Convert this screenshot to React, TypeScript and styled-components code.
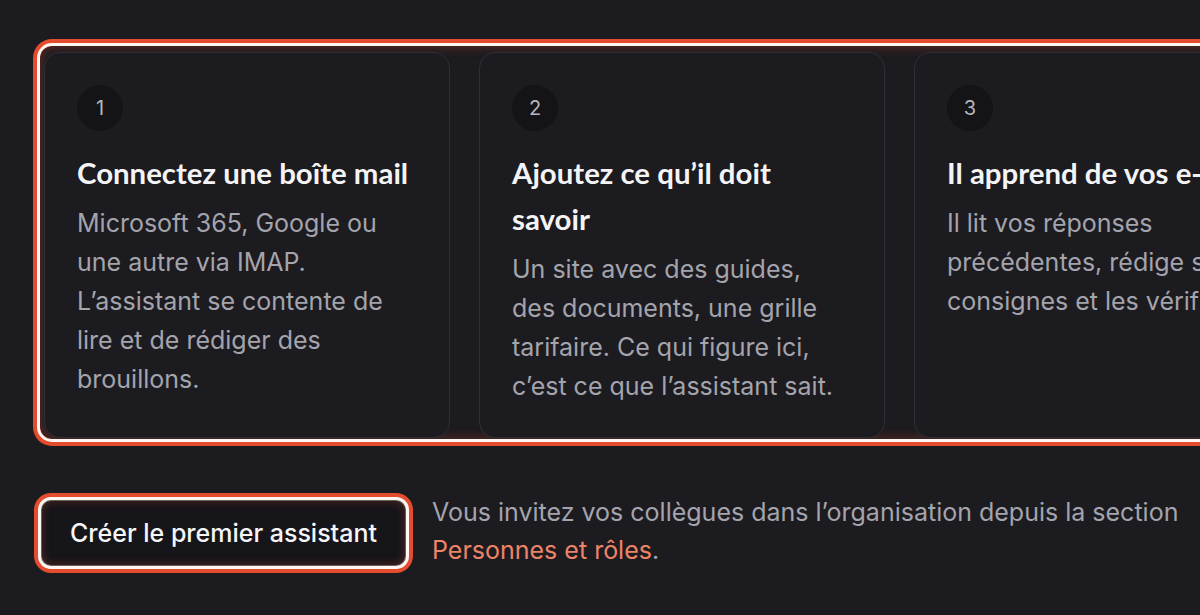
import styled, { createGlobalStyle } from "styled-components";

const GlobalStyle = createGlobalStyle`
  html, body {
    margin: 0;
    padding: 0;
    background: #1c1b20;
    overflow: hidden;
  }
  body {
    width: 1200px;
    height: 615px;
  }
`;

const Page = styled.main`
  padding: 46px 0 0 40px;
  font-family: Inter, "Liberation Sans", sans-serif;
  color: #a4a4ad;
`;

const StepsRing = styled.section`
  width: 1320px;
  border-radius: 12px;
  padding: 6px 0 1px 4px;
  box-shadow:
    0 0 0 3px #fdf7f4,
    0 0 0 7px #e34d2d,
    inset 0 0 12px rgba(225, 75, 44, 0.4);
`;

const Steps = styled.ol`
  display: flex;
  gap: 29px;
  margin: 0;
  padding: 0;
  list-style: none;
`;

const Card = styled.li`
  flex: 0 0 406px;
  box-sizing: border-box;
  padding: 32px 39px 31px 32px;
  border: 1px solid #2f2e34;
  border-radius: 16px;
  background: #1c1b20;
`;

const Badge = styled.span`
  display: flex;
  align-items: center;
  justify-content: center;
  width: 46px;
  height: 46px;
  border-radius: 50%;
  background: #141417;
  color: #b6b6be;
  font-size: 20px;
`;

const CardTitle = styled.h3`
  margin: 19px 0 8px;
  font-family: Lato, "Noto Sans", sans-serif;
  font-weight: 700;
  font-size: 29.4px;
  line-height: 46px;
  color: #f4f4f6;
`;

const CardText = styled.p`
  margin: 0;
  font-size: 25px;
  line-height: 39px;
  color: #a4a4ad;
`;

const Footer = styled.div`
  display: flex;
  align-items: center;
  gap: 26px;
  margin-top: 54px;
  margin-left: 1px;
`;

const PrimaryButton = styled.button`
  flex: none;
  height: 66px;
  padding: 0 28px;
  border: 1px solid rgba(255, 230, 220, 0.35);
  border-radius: 10px;
  background: #16151a;
  color: #f6f6f8;
  font-family: Inter, "Liberation Sans", sans-serif;
  font-size: 25px;
  font-weight: 500;
  box-shadow:
    0 0 0 3px #fdf7f4,
    0 0 0 7px #e34d2d,
    inset 0 0 10px rgba(225, 75, 44, 0.3);
  cursor: pointer;
`;

const Note = styled.p`
  width: 780px;
  margin: 0 0 4px;
  font-size: 25px;
  line-height: 38px;
  color: #a4a4ad;
`;

const NoteLink = styled.a`
  color: #ec8467;
  text-decoration: none;
`;

const steps = [
  {
    title: "Connectez une boîte mail",
    text: "Microsoft 365, Google ou une autre via IMAP. L’assistant se contente de lire et de rédiger des brouillons.",
  },
  {
    title: "Ajoutez ce qu’il doit savoir",
    text: "Un site avec des guides, des documents, une grille tarifaire. Ce qui figure ici, c’est ce que l’assistant sait.",
  },
  {
    title: "Il apprend de vos e-mails",
    text: "Il lit vos réponses précédentes, rédige ses consignes et les vérifie.",
  },
];

export default function App() {
  return (
    <>
      <GlobalStyle />
      <Page>
        <StepsRing>
          <Steps>
            {steps.map((step, index) => (
              <Card key={step.title}>
                <Badge>{index + 1}</Badge>
                <CardTitle>{step.title}</CardTitle>
                <CardText>{step.text}</CardText>
              </Card>
            ))}
          </Steps>
        </StepsRing>
        <Footer>
          <PrimaryButton>Créer le premier assistant</PrimaryButton>
          <Note>
            Vous invitez vos collègues dans l’organisation depuis la section{" "}
            <NoteLink href="#">Personnes et rôles</NoteLink>.
          </Note>
        </Footer>
      </Page>
    </>
  );
}
